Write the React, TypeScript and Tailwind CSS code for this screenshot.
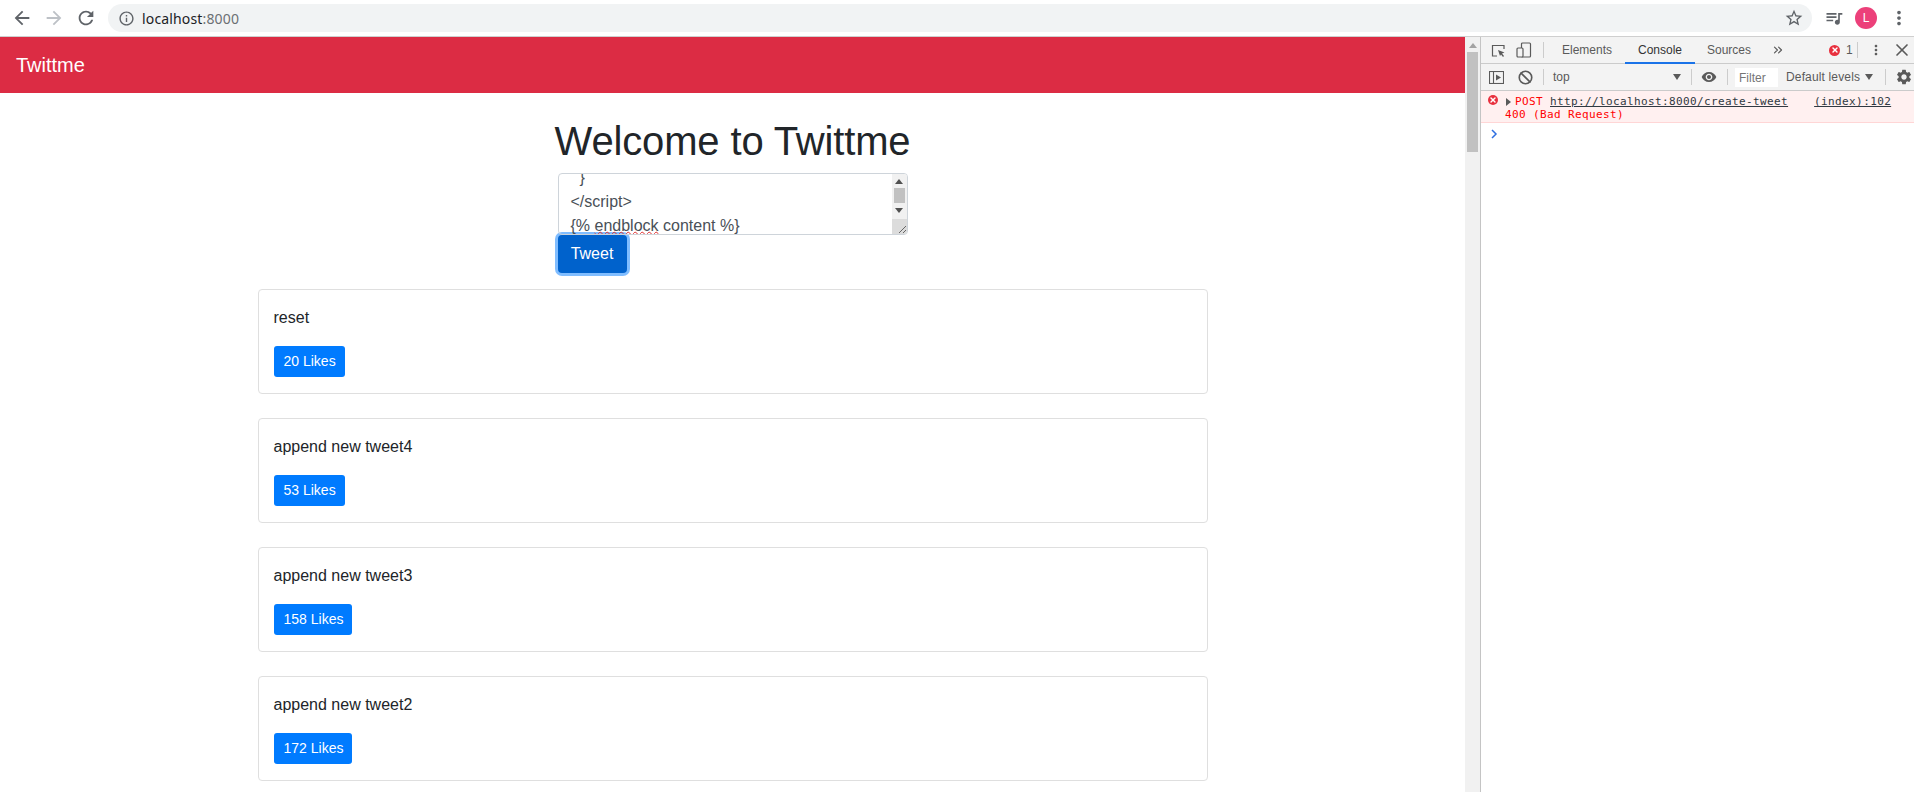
import React from 'react';
import { X, Ban, ChevronsRight } from 'lucide-react';
import { MdArrowBack, MdArrowForward, MdRefresh, MdInfoOutline, MdStarBorder, MdQueueMusic, MdMoreVert, MdSettings, MdVisibility } from 'react-icons/md';

const tweets = [
    { text: 'reset', likes: 20 },
    { text: 'append new tweet4', likes: 53 },
    { text: 'append new tweet3', likes: 158 },
    { text: 'append new tweet2', likes: 172 },
];

const TweetCard = ({ text, likes }: { text: string; likes: number }) => (
    <div className="w-[950px] h-[105px] mb-6 border border-[#dfdfdf] rounded-[4px] px-[15px] pt-4">
        <p className="text-[16px] leading-6 text-[#212529]">{text}</p>
        <button className="block mt-4 h-[31px] pl-[10px] pr-[9px] bg-[#007bff] rounded-[3px] text-white text-[14px] leading-[31px]">{likes} Likes</button>
    </div>
);

const BrowserBar = () => (
    <div className="h-[37px] flex items-center bg-white border-b border-[#cfcfcf] shrink-0">
        <MdArrowBack className="ml-[11px] shrink-0 text-[#5f6368]" size={22} />
        <MdArrowForward className="ml-[10px] shrink-0 text-[#bdc1c6]" size={22} />
        <MdRefresh className="ml-[10px] shrink-0 text-[#5f6368]" size={22} />
        <div className="ml-[11px] w-[1704px] h-[28px] bg-[#f1f3f4] rounded-full flex items-center shrink-0">
            <MdInfoOutline className="ml-[10px] text-[#5f6368]" size={17} />
            <span className="ml-[7px] text-[14px] tracking-[0.15px] text-[#202124] font-['Noto_Sans',sans-serif]">localhost<span className="text-[#6b6f73]">:8000</span></span>
            <MdStarBorder className="ml-auto mr-[8px] text-[#5f6368]" size={20} />
        </div>
        <MdQueueMusic className="ml-[12px] shrink-0 text-[#5f6368]" size={20} />
        <div className="ml-[11px] w-[22px] h-[22px] shrink-0 rounded-full bg-[#ec407a] text-white text-[12px] flex items-center justify-center">L</div>
        <MdMoreVert className="ml-[11px] shrink-0 text-[#5f6368]" size={22} />
    </div>
);

const ErrorDot = ({ size }: { size: string }) => (
    <span className={`${size} rounded-full bg-[#e8303e] text-white flex items-center justify-center shrink-0`}>
        <X className="w-2 h-2" strokeWidth={4} />
    </span>
);

const DevTools = () => (
    <div className="w-[434px] shrink-0 border-l border-[#c4c4c4] bg-white text-[12px] text-[#5a5a5a]">
        <div className="h-[27px] bg-[#f3f3f3] border-b border-[#cbcbcb] flex items-center">
            <svg className="ml-[10px] shrink-0" width="15" height="15" viewBox="0 0 15 15" fill="none" stroke="#5a5a5a">
                <path d="M6 13H1.500V2.500H13V6" strokeWidth="1.200" />
                <path d="M7 7l6.500 2.500-2.500 1 2 2.500-1 1-2-2.500-1 1.500z" fill="#5a5a5a" stroke="none" />
            </svg>
            <svg className="ml-[10px] shrink-0" width="16" height="16" viewBox="0 0 16 16" fill="none" stroke="#5a5a5a" strokeWidth="1.200">
                <rect x="5.500" y="1" width="9" height="14" rx="1" />
                <rect x="1" y="6" width="6" height="9" rx="1" fill="#f3f3f3" />
            </svg>
            <span className="ml-[11px] w-px h-[16px] bg-[#ccc]" />
            <span className="ml-[18px] w-[51px] text-[#5a5a5a]">Elements</span>
            <div className="ml-[12px] w-[70px] h-[27px] leading-[26px] text-center text-[#333] border-b-2 border-[#1a73e8]">Console</div>
            <span className="ml-[12px] w-[45px]">Sources</span>
            <ChevronsRight className="ml-[19px] w-[14px] h-[14px]" />
            <span className="ml-[44px]"><ErrorDot size="w-[11px] h-[11px]" /></span>
            <span className="ml-[6px]">1</span>
            <span className="ml-[4px] w-px h-[16px] bg-[#ccc]" />
            <MdMoreVert className="ml-[10px] shrink-0" size={16} />
            <X className="ml-[8px] w-[20px] h-[20px]" strokeWidth={2} />
        </div>
        <div className="h-[27px] bg-[#f3f3f3] border-b border-[#cbcbcb] flex items-center">
            <svg className="ml-[8px] shrink-0" width="15" height="13" viewBox="0 0 15 13" fill="none" stroke="#5a5a5a" strokeWidth="1.100">
                <rect x="0.500" y="0.500" width="14" height="12" />
                <path d="M4.500 0.500v12" />
                <path d="M7 3.500l5 3-5 3z" fill="#5a5a5a" stroke="none" />
            </svg>
            <Ban className="ml-[14px] w-[15px] h-[15px]" strokeWidth={2.600} />
            <span className="ml-[10px] w-px h-[16px] bg-[#ccc]" />
            <span className="ml-[9px] w-[120px]">top</span>
            <span className="w-0 h-0 border-x-[4px] border-x-transparent border-t-[6px] border-t-[#5a5a5a]" />
            <span className="ml-[10px] w-px h-[16px] bg-[#ccc]" />
            <MdVisibility className="ml-[9px] shrink-0" size={16} />
            <span className="ml-[10px] w-px h-[16px] bg-[#ccc]" />
            <span className="ml-[7px] w-[43px] h-[19px] bg-white pl-[4px] leading-[20px] text-[#757575]">Filter</span>
            <span className="ml-[8px] w-[74px] tracking-[0.15px] whitespace-nowrap">Default levels</span>
            <span className="ml-[5px] w-0 h-0 border-x-[4px] border-x-transparent border-t-[6px] border-t-[#5a5a5a]" />
            <span className="ml-[12px] w-px h-[16px] bg-[#ccc]" />
            <MdSettings className="ml-[9px] shrink-0" size={18} />
        </div>
        <div className="h-[32px] bg-[#fff0f0] border-b border-[#ffd6d6] pl-[7px] flex font-['DejaVu_Sans_Mono',monospace] text-[11px] leading-[13px] tracking-[0.38px] text-[#ff0000]">
            <span className="mt-[4px] mr-[5px]"><ErrorDot size="w-[10px] h-[10px]" /></span>
            <div className="pt-[4px]">
                <div className="flex items-center whitespace-pre">
                    <span className="ml-[3px] mr-[4px] w-0 h-0 border-y-[4px] border-y-transparent border-l-[5px] border-l-[#5a5a5a]" />
                    POST <span className="text-[#303942] underline">http://localhost:8000/create-tweet</span>
                    <span className="ml-[26px] text-[#303942] underline">(index):102</span>
                </div>
                <div className="ml-[2px]">400 (Bad Request)</div>
            </div>
        </div>
        <svg className="ml-[10px] mt-[6px]" width="7" height="10" viewBox="0 0 7 10" fill="none" stroke="#2f6fe0" strokeWidth="1.500">
            <path d="M1 1l4 4-4 4" />
        </svg>
    </div>
);

export default function App() {
    return (
        <div className="h-[792px] w-[1914px] overflow-hidden flex flex-col bg-white font-['Liberation_Sans',sans-serif]">
            <BrowserBar />
            <div className="flex flex-1 min-h-0">
                <div className="w-[1465px] shrink-0 overflow-hidden">
                    <div className="h-[56px] bg-[#dc2c44] pl-4 flex items-center text-white text-[20px]">Twittme</div>
                    <div className="flex flex-col items-center pt-6">
                        <h1 className="text-[40px] leading-[48px] tracking-[-0.15px] text-[#212529]">Welcome to Twittme</h1>
                        <div className="w-[350px] mt-2">
                            <div className="relative h-[62px] border border-[#ced4da] rounded-[4px] overflow-hidden px-3 text-[16px] leading-6 text-[#495057] whitespace-pre">
                                <div className="-mt-[8px]">{'  }'}</div>
                                <div>{'</script>'}</div>
                                <div>
                                    {'{% '}
                                    <span className="underline decoration-wavy decoration-[#e03030] decoration-1 underline-offset-[0px]">endblock</span>
                                    {' content %}'}
                                </div>
                                <div className="absolute top-0 right-0 bottom-0 w-[15px] bg-[#f1f1f1] flex flex-col items-center">
                                    <span className="mt-[5px] w-0 h-0 border-x-[4px] border-x-transparent border-b-[5px] border-b-[#505050]" />
                                    <span className="mt-[4px] w-[11px] h-[15px] bg-[#c1c1c1]" />
                                    <span className="mt-[5px] w-0 h-0 border-x-[4px] border-x-transparent border-t-[5px] border-t-[#505050]" />
                                    <span className="mt-auto w-[15px] h-[15px] bg-[#dcdcdc] flex items-end justify-end">
                                        <svg width="9" height="9" viewBox="0 0 9 9" fill="none" stroke="#666" strokeWidth="1">
                                            <path d="M1 8l7-7M5 8l3-3" />
                                        </svg>
                                    </span>
                                </div>
                            </div>
                            <button className="block w-[69px] h-[38px] bg-[#0062cc] rounded-[4px] text-white text-[16px] ring-[3px] ring-[#80bdff]">Tweet</button>
                        </div>
                        <div className="mt-4">
                            {tweets.map((t) => (
                                <TweetCard key={t.text} text={t.text} likes={t.likes} />
                            ))}
                        </div>
                    </div>
                </div>
                <div className="w-[15px] shrink-0 bg-[#f1f1f1] flex flex-col items-center">
                    <span className="mt-[6px] w-0 h-0 border-x-[4px] border-x-transparent border-b-[5px] border-b-[#a3a3a3]" />
                    <span className="mt-[4px] w-[11px] h-[100px] bg-[#c1c1c1]" />
                </div>
                <DevTools />
            </div>
        </div>
    );
}
